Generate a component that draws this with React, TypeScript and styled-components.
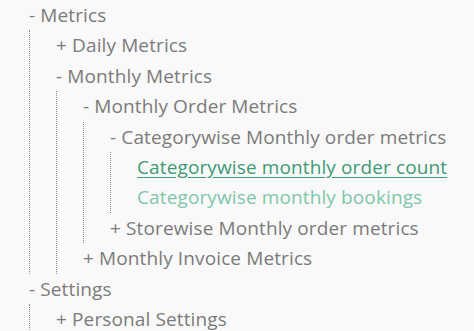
import React from "react";
import styled, { createGlobalStyle } from "styled-components";

const Global = createGlobalStyle`
  html, body { margin: 0; padding: 0; background: #f9f9f9; }
  body { font-family: "Open Sans", "Noto Sans", sans-serif; }
`;

const Tree = styled.div`
  padding: 0 0 0 29px;
  color: #7b7b7b;
  font-size: 19px;
  letter-spacing: 0.12px;
`;

const Row = styled.div`
  height: 30.4px;
  line-height: 30.4px;
  white-space: nowrap;
`;

const Children = styled.div`
  border-left: 1px dotted #8a8a8a;
  padding-left: 26px;
`;

const Link = styled.a<{ $active?: boolean }>`
  color: ${(p) => (p.$active ? "#3f9a76" : "#7fc6ab")};
  text-decoration: ${(p) => (p.$active ? "underline" : "none")};
  text-underline-offset: 3px;
  cursor: pointer;
`;

type Node = {
  label: string;
  open?: boolean;
  leaf?: "active" | "plain";
  children?: Node[];
};

const data: Node[] = [
  {
    label: "Metrics",
    open: true,
    children: [
      { label: "Daily Metrics" },
      {
        label: "Monthly Metrics",
        open: true,
        children: [
          {
            label: "Monthly Order Metrics",
            open: true,
            children: [
              {
                label: "Categorywise Monthly order metrics",
                open: true,
                children: [
                  { label: "Categorywise monthly order count", leaf: "active" },
                  { label: "Categorywise monthly bookings", leaf: "plain" },
                ],
              },
              { label: "Storewise Monthly order metrics" },
            ],
          },
          { label: "Monthly Invoice Metrics" },
        ],
      },
    ],
  },
  {
    label: "Settings",
    open: true,
    children: [{ label: "Personal Settings" }],
  },
];

function TreeNode({ node }: { node: Node }) {
  if (node.leaf) {
    return (
      <Row>
        <Link $active={node.leaf === "active"}>{node.label}</Link>
      </Row>
    );
  }
  return (
    <div>
      <Row>
        {node.open ? "- " : "+ "}
        {node.label}
      </Row>
      {node.open && node.children && (
        <Children>
          {node.children.map((c) => (
            <TreeNode key={c.label} node={c} />
          ))}
        </Children>
      )}
    </div>
  );
}

export default function App() {
  return (
    <>
      <Global />
      <Tree>
        {data.map((n) => (
          <TreeNode key={n.label} node={n} />
        ))}
      </Tree>
    </>
  );
}
